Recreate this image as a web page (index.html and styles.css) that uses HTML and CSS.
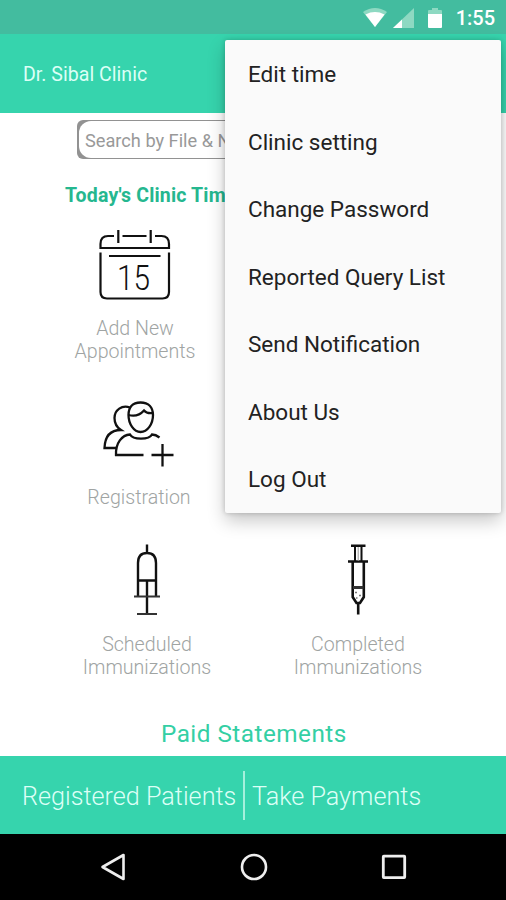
FILE: index.html
```html
<!DOCTYPE html>
<html lang="en">
<head>
    <meta charset="UTF-8">
    <meta name="viewport" content="width=device-width, initial-scale=1">
    <title>Dr. Sibal Clinic</title>
    <link rel="stylesheet" href="styles.css">
</head>
<body>

    <div class="statusbar">
        <svg class="wifi" width="24" height="19" viewBox="0 0 24 19">
            <path d="M0 4 Q12 -4 24 4 L12 19 Z" fill="#8ed9c2"/>
            <path d="M2.5 6.5 Q12 1.6 21.5 6.5 L12 19 Z" fill="#fff"/>
        </svg>
        <svg class="signal" width="21" height="20" viewBox="0 0 21 20">
            <path d="M21 0 V20 H0 Z" fill="#8ed9c2"/>
            <path d="M9 11.4 V20 H0 Z" fill="#fff"/>
        </svg>
        <svg class="battery" width="14" height="20" viewBox="0 0 14 20">
            <path d="M1 2 H4 V0 H10 V2 H13 Q14 2 14 3 V6 H0 V3 Q0 2 1 2 Z" fill="#8ed9c2"/>
            <path d="M0 6 H14 V19 Q14 20 13 20 H1 Q0 20 0 19 Z" fill="#fff"/>
        </svg>
        <span class="clock">1:55</span>
    </div>

    <header>
        <h1>Dr. Sibal Clinic</h1>
    </header>

    <main>
        <div class="search"><p>Search by File &amp; N</p></div>
        <h2>Today's Clinic Tim</h2>

        <div class="tiles">
            <div class="tile appointments">
                <svg width="72" height="72" viewBox="0 0 72 72" fill="none" stroke="#111" stroke-width="2.2">
                    <path d="M19.3 1 V14 M51.7 1 V14 M23.5 7 H47.5 M15 7 H9 Q1.5 7 1.5 15 V19 H70 V15 Q70 7 62.5 7 H56"/>
                    <path d="M1.5 23.5 V63 Q1.5 69.5 8 69.5 H63.5 Q70 69.5 70 63 V23.5 M10 27 H61.5"/>
                    <text class="day" x="18" y="61" textLength="33" lengthAdjust="spacingAndGlyphs">15</text>
                </svg>
                <p>Add New<br>Appointments</p>
            </div>

            <div class="tile registration">
                <svg width="72" height="66" viewBox="0 0 72 66" fill="none" stroke="#111" stroke-width="2.3">
                    <path d="M37.5 1.5 C29 1.5 25.5 7 25.5 14 C25.5 23 31 31 37.5 31 C44.5 31 50 23 50 14 C50 7 46 1.5 37.5 1.5 Z"/>
                    <path d="M25.5 14 C31 15.5 37 14 41 9.5 C43 12 46 12.5 50 12"/>
                    <path d="M27 6.5 C19 3.5 11.5 9 11.5 17 C11.5 22 14 26.5 18 29 C9 29 2 33 1.5 47 H13"/>
                    <path d="M40.5 54 H13 C12.5 42 19 34 27 33.5 C30 39 46 39 49 33.5 C52 33.5 54 34.5 56.5 36.5"/>
                    <path d="M48.5 54 H70.5 M59.5 43 V65.5"/>
                </svg>
                <p>Registration</p>
            </div>
        </div>

        <div class="tiles immunizations">
            <div class="tile">
                <svg width="28" height="72" viewBox="0 0 28 72" fill="none" stroke="#111" stroke-width="2.4">
                    <path d="M14 0.5 V9 M5 52 V19 Q5 9 14 9 Q23 9 23 19 V52 M5 36.5 H23 M14 36.5 V70"/>
                    <path d="M1 52.5 H27 M4 70 H24" stroke="#333" stroke-width="2"/>
                </svg>
                <p>Scheduled<br>Immunizations</p>
            </div>
            <div class="tile">
                <svg width="20" height="72" viewBox="0 0 20 72" fill="none" stroke="#111" stroke-width="2.6">
                    <path d="M3 1.7 H17.5 M0 17.5 H20"/>
                    <path d="M7 2 V17 M13.5 2 V17" stroke-width="2"/>
                    <path d="M10.2 3 V17" stroke="#999" stroke-width="1"/>
                    <path d="M4.7 18 V53 L8.5 59 H12 L15.8 53 V18"/>
                    <path d="M5 43.5 H15.5" stroke="#333" stroke-width="3"/>
                    <path d="M10.2 58 V70.5"/>
                    <path d="M7 48.5 H9 M11 51.5 H13 M8 54 H9.5" stroke="#777" stroke-width="1.5"/>
                </svg>
                <p>Completed<br>Immunizations</p>
            </div>
        </div>

        <p class="paid">Paid Statements</p>
    </main>

    <footer>
        <span class="patients">Registered Patients</span>
        <span class="payments">Take Payments</span>
    </footer>

    <nav>
        <svg width="26" height="28" viewBox="0 0 26 28" fill="none" stroke="#eee" stroke-width="2.6">
            <path d="M23.5 2 V26 L2.5 14 Z" stroke-linejoin="round"/>
        </svg>
        <svg width="28" height="28" viewBox="0 0 28 28" fill="none" stroke="#eee" stroke-width="2.6">
            <circle cx="14" cy="14" r="12"/>
        </svg>
        <svg width="26" height="28" viewBox="0 0 26 28" fill="none" stroke="#eee" stroke-width="2.8">
            <rect x="2.3" y="3.2" width="21.4" height="21.4" rx="0.5"/>
        </svg>
    </nav>

    <ul class="menu">
        <li>Edit time</li>
        <li>Clinic setting</li>
        <li>Change Password</li>
        <li>Reported Query List</li>
        <li>Send Notification</li>
        <li>About Us</li>
        <li>Log Out</li>
    </ul>

</body>
</html>
```
FILE: styles.css
```css
* {
    font-family: Roboto, sans-serif;
    box-sizing: border-box;
    margin: 0;
    padding: 0;
}
body {
    position: relative;
    width: 506px;
    height: 900px;
    overflow: hidden;
    display: flex;
    flex-direction: column;
    background-color: white;
}
svg {
    display: block;
}
.statusbar {
    height: 34px;
    background-color: #43bc9f;
    display: flex;
    justify-content: flex-end;
    padding: 8px 11px 0 0;
}
.wifi {
    margin-right: 6px;
}
.signal {
    margin-right: 14px;
}
.battery {
    margin-right: 14px;
}
.clock {
    color: white;
    font-size: 20px;
    font-weight: 500;
    line-height: 21px;
}
header {
    height: 79px;
    background-color: #36d4ad;
    padding: 28px 23px 0;
}
header > h1 {
    color: #dcfff6;
    font-size: 19.6px;
    font-weight: 400;
    line-height: 26px;
}
main {
    height: 643px;
    padding-top: 7px;
}
.search {
    width: 350px;
    height: 39px;
    margin-left: 77px;
    padding: 1px 1px 1px 2px;
    background-color: #929292;
    border-radius: 6px;
}
.search p {
    height: 37px;
    padding-left: 6px;
    background-color: white;
    border-radius: 12px;
    color: #999;
    font-size: 18.2px;
    line-height: 39px;
    white-space: nowrap;
}
main > h2 {
    margin: 25px 0 0 65px;
    color: #25b78f;
    font-size: 19.5px;
    font-weight: 700;
    line-height: 24px;
    letter-spacing: 0.17px;
}
.tiles {
    display: flex;
    flex-direction: column;
    align-items: flex-start;
    padding-left: 64px;
}
.tile {
    width: 142px;
    display: flex;
    flex-direction: column;
    align-items: center;
    color: #a0a4a3;
    font-size: 19.6px;
    font-weight: 300;
    line-height: 23px;
    text-align: center;
}
.appointments {
    height: 172px;
    padding-top: 21px;
}
.appointments p {
    padding-top: 16px;
}
.day {
    fill: #111;
    stroke: none;
    font-size: 35px;
    font-weight: 300;
}
.registration {
    width: 150px;
    padding-top: 21px;
}
.registration p {
    padding-top: 19px;
}
.immunizations {
    flex-direction: row;
    padding: 35px 0 0 76px;
    gap: 69px;
}
.immunizations p {
    padding-top: 17px;
}
.paid {
    padding: 41px 0 0 161px;
    color: #34cfa4;
    font-size: 24.3px;
    line-height: 28px;
    letter-spacing: 0.48px;
}
footer {
    height: 78px;
    background-color: #36d4ad;
    display: flex;
    align-items: center;
    padding-left: 22px;
    color: #dcfff6;
    font-size: 25.2px;
    font-weight: 300;
}
footer > span {
    height: 49px;
    line-height: 51px;
    white-space: nowrap;
}
.patients {
    width: 223px;
    border-right: 2px solid #a5f0dc;
}
.payments {
    padding-left: 7px;
}
nav {
    height: 66px;
    background-color: black;
    display: flex;
    justify-content: space-between;
    align-items: center;
    padding: 0 99px 0 100px;
}
.menu {
    position: absolute;
    top: 40px;
    left: 225px;
    width: 276px;
    background-color: #fafafa;
    border-radius: 2px;
    box-shadow: 0 8px 18px rgba(0, 0, 0, 0.22), 0 0 5px rgba(0, 0, 0, 0.2);
    list-style: none;
}
.menu li {
    height: 67.5px;
    padding-left: 23px;
    color: #222;
    font-size: 22.5px;
    line-height: 68px;
}
```
